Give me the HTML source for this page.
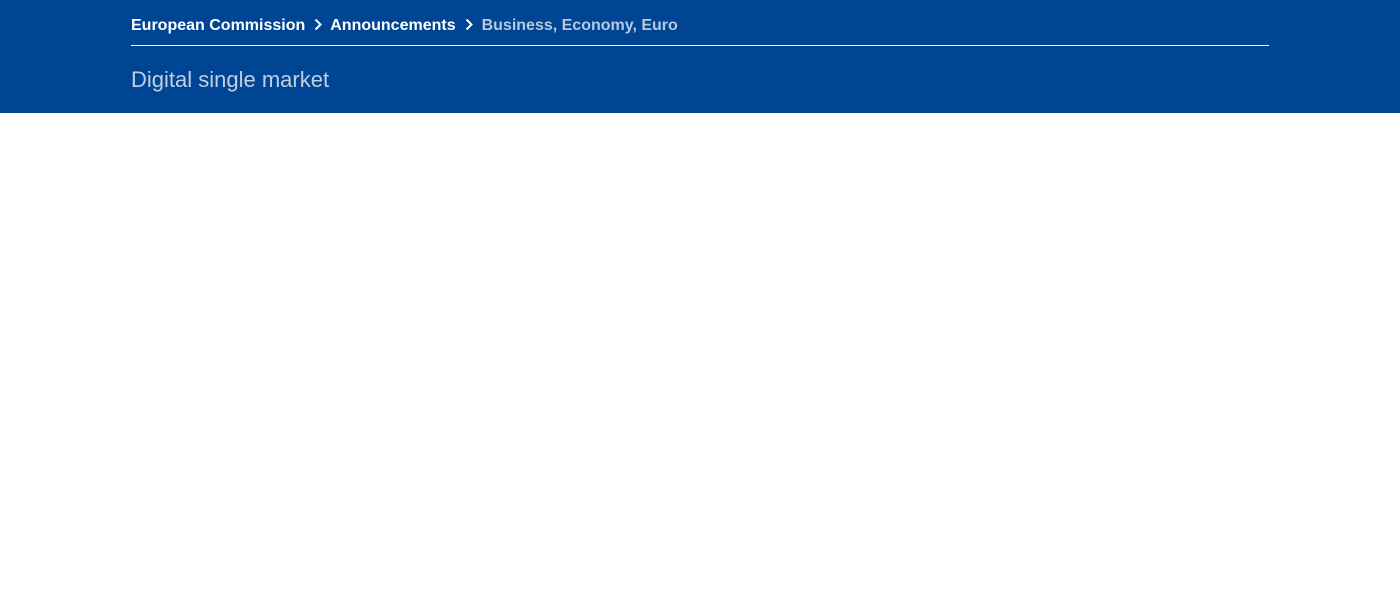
<!DOCTYPE html>
<html><head><style>
body{margin:0;background:#fff;font-family:"Liberation Sans",sans-serif;}
.hdr{position:absolute;left:0;top:0;width:1400px;height:113px;background:#004494;}
.bc{position:absolute;left:131px;top:16px;font-size:16px;font-weight:bold;color:#fff;white-space:nowrap;line-height:19px;}
.bc span{display:inline-block;vertical-align:top}
.cur{color:#b8c8e0}
.line{position:absolute;left:131px;top:45px;width:1138px;height:1px;background:#fff}
.title{position:absolute;left:131px;top:67px;font-size:22px;color:#c0cfe4;line-height:26px}
svg{vertical-align:top;margin:0 8px 0 9px}
</style></head><body>
<div class="hdr">
<div class="bc"><span>European Commission</span><svg width="8" height="19" viewBox="0 0 8 19"><path d="M1.5 3.5l5 5-5 5" stroke="#fff" stroke-width="2" fill="none"/></svg><span>Announcements</span><svg width="8" height="19" viewBox="0 0 8 19" style="margin-right:9px"><path d="M1.5 3.5l5 5-5 5" stroke="#fff" stroke-width="2" fill="none"/></svg><span class="cur">Business, Economy, Euro</span></div>
<div class="line"></div>
<div class="title">Digital single market</div>
</div>
</body></html>
